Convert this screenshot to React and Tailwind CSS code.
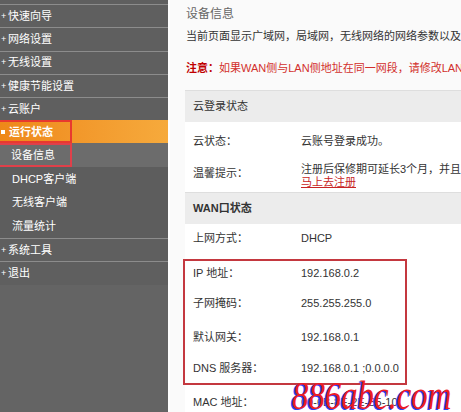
import React from "react";

const topMenu = ["快速向导", "网络设置", "无线设置", "健康节能设置", "云账户"];
const subMenu = ["DHCP客户端", "无线客户端", "流量统计"];

const Plus = () => <span className="w-[7px] text-[9px] leading-none text-white">+</span>;

const MenuItem = ({ label }) => (
  <div className="h-[23.3px] border-t border-[#8c8c8c] bg-[#5f5f5f] flex items-center pl-[1px]">
    <Plus />
    <span>{label}</span>
  </div>
);

const Row = ({ label, h, children, labelCls = "" }) => (
  <div className={`flex items-center pl-[8px] ${h}`}>
    <span className={`w-[108px] shrink-0 ${labelCls}`}>{label}</span>
    <div className="whitespace-nowrap">{children}</div>
  </div>
);

const Band = ({ children, bold }) => (
  <div className={`h-[32px] bg-[#ececec] border-t border-[#dedede] flex items-center pl-[8px] text-[#333] ${bold ? "font-bold" : ""}`}>
    {children}
  </div>
);

export default function App() {
  return (
    <div className="relative w-[461px] h-[412px] overflow-hidden flex font-['Liberation_Sans','Noto_Sans_CJK_SC',sans-serif] text-[11px]">
      {/* left menu */}
      <div className="w-[168px] shrink-0 bg-[#646464] text-white">
        <div className="h-[4px] bg-[#5f5f5f]" />
        {topMenu.map((m) => (
          <MenuItem key={m} label={m} />
        ))}
        <div className="h-[23px] bg-linear-to-r from-[#ee8818] to-[#f6aa3c]">
          <div className="w-[72px] h-full border-2 border-l-0 border-[#e8392f] flex items-center pl-[1px] font-bold">
            <span className="w-[4px] h-[4px] bg-white mr-[4px]" />
            运行状态
          </div>
        </div>
        <div className="h-[24px] bg-[#6c6c6c]">
          <div className="w-[72px] h-full border-2 border-l-0 border-[#e0404a] flex items-center pl-[11px]">
            设备信息
          </div>
        </div>
        {subMenu.map((m) => (
          <div key={m} className="h-[23.5px] bg-[#5d5d5d] flex items-center pl-[12px]">
            {m}
          </div>
        ))}
        <MenuItem label="系统工具" />
        <MenuItem label="退出" />
      </div>

      {/* content */}
      <div className="flex-1 min-w-0 bg-[#fafafa] border-l-2 border-white pl-[16px] text-[#333]">
        <div className="h-[28px] flex items-center text-[12px] text-[#666]">设备信息</div>
        <div className="h-[16px] flex items-center whitespace-nowrap">
          当前页面显示广域网，局域网，无线网络的网络参数以及路由器的版本信息。
        </div>
        <div className="h-[16px] mt-[16px] flex items-center whitespace-nowrap text-[#d2302c]">
          <span className="font-bold text-[#c00000]">注意：</span>
          如果WAN侧与LAN侧地址在同一网段，请修改LAN侧IP地址。
        </div>

        <div className="mt-[14px] -ml-[1px] w-[320px] bg-white">
          <Band>云登录状态</Band>
          <Row label="云状态：" h="h-[38px]">云账号登录成功。</Row>
          <Row label="温馨提示：" h="h-[32px]" labelCls="-mt-[6px]">
            <div className="leading-[13px]">注册后保修期可延长3个月，并且可享受更多服务</div>
            <div className="leading-[13px] text-[#c82424] underline">马上去注册</div>
          </Row>
          <Band bold>WAN口状态</Band>
          <Row label="上网方式：" h="h-[28px]">DHCP</Row>

          <div className="mt-[7px] -ml-[2px] w-[224px] border-2 border-[#c4383f]">
            <Row label="IP 地址：" h="h-[25px]">192.168.0.2</Row>
            <Row label="子网掩码：" h="h-[34px]">255.255.255.0</Row>
            <Row label="默认网关：" h="h-[34px]">192.168.0.1</Row>
            <Row label="DNS 服务器：" h="h-[29px]">192.168.0.1 ;0.0.0.0</Row>
          </div>
          <Row label="MAC 地址：" h="h-[35px]">00-6B-8E-2E-B5-10</Row>
        </div>
      </div>

      {/* watermark */}
      <div className="absolute left-[292px] top-[376px] origin-left scale-x-[0.82] whitespace-nowrap font-['Liberation_Serif',serif] italic text-[40px] leading-[40px] text-[#ee1c25] [text-shadow:-2px_1px_0_#2b3cf5]">
        886abc.com
      </div>
    </div>
  );
}
